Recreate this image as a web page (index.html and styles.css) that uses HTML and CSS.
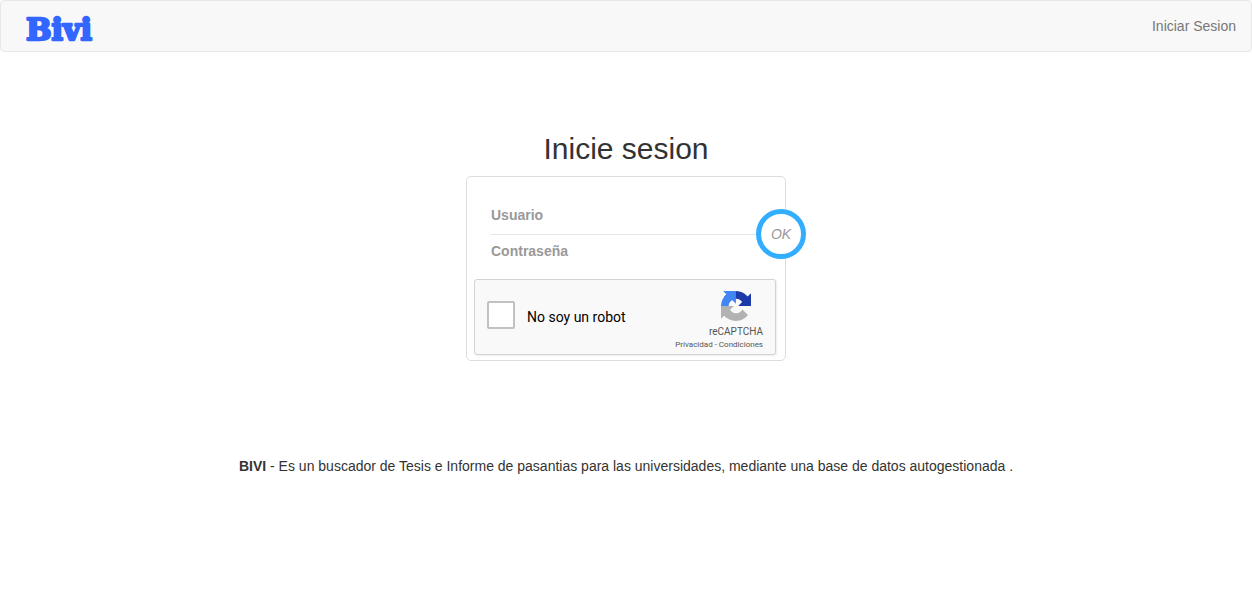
FILE: index.html
```html
<!DOCTYPE html>
<html lang="es">
<head>
<meta charset="utf-8">
<title>Bivi</title>
<link rel="stylesheet" href="styles.css">
</head>
<body>
<nav class="navbar">
  <a class="brand"><svg class="logo" width="76" height="34" viewBox="0 0 76 34"><text x="5" y="26.7" textLength="66" lengthAdjust="spacingAndGlyphs">Bivi</text></svg></a>
  <a class="nav-link">Iniciar Sesion</a>
</nav>
<main class="page">
  <h1 class="title">Inicie sesion</h1>
  <form class="card">
    <div class="fields">
      <label class="field">Usuario</label>
      <label class="field">Contraseña</label>
    </div>
    <button class="ok" type="button">OK</button>
    <div class="captcha">
      <span class="checkbox"></span>
      <span class="captcha-label">No soy un robot</span>
      <div class="captcha-brand">
        <svg class="captcha-icon" width="30" height="30" viewBox="0 0 64 64">
          <path fill="#1c3aa9" d="M64 31.955l-.033-1.37V4.687l-7.16 7.16C50.948 4.674 42.033.093 32.05.093c-10.4 0-19.622 4.96-25.458 12.64l11.736 11.86a15.55 15.55 0 0 1 4.754-5.334c2.05-1.6 4.952-2.906 8.968-2.906.485 0 .86.057 1.135.163 4.976.393 9.288 3.14 11.828 7.124l-8.307 8.307L64 31.953"/>
          <path fill="#4285f4" d="M31.862.094l-1.37.033H4.594l7.16 7.16C4.58 13.147 0 22.06 0 32.046c0 10.4 4.96 19.622 12.64 25.458L24.5 45.768a15.55 15.55 0 0 1-5.334-4.754c-1.6-2.05-2.906-4.952-2.906-8.968 0-.485.057-.86.163-1.135.393-4.976 3.14-9.288 7.124-11.828l8.307 8.307L31.86.095"/>
          <path fill="#b2b2b2" d="M.001 32.045l.033 1.37v25.898l7.16-7.16c5.86 7.173 14.774 11.754 24.76 11.754 10.4 0 19.622-4.96 25.458-12.64l-11.736-11.86a15.55 15.55 0 0 1-4.754 5.334c-2.05 1.6-4.952 2.906-8.968 2.906-.485 0-.86-.057-1.135-.163-4.976-.393-9.288-3.14-11.828-7.124l8.307-8.307c-10.522.04-22.4.066-27.295-.005"/>
        </svg>
        <div class="captcha-name">reCAPTCHA</div>
        <div class="captcha-links">Privacidad - Condiciones</div>
      </div>
    </div>
  </form>
  <p class="about"><b>BIVI</b> - Es un buscador de Tesis e Informe de pasantias para las universidades, mediante una base de datos autogestionada .</p>
</main>
</body>
</html>
```
FILE: styles.css
```css
* { box-sizing: border-box; }
body {
  margin: 0;
  background: #fff;
  color: #333;
  font: 14px/20px "Liberation Sans", Arial, sans-serif;
}
.navbar {
  display: flex;
  justify-content: space-between;
  height: 52px;
  padding: 0 15px 0 20px;
  background: #f8f8f8;
  border: 1px solid #e7e7e7;
  border-radius: 4px;
}
.brand { padding-top: 12px; }
.logo { display: block; }
.logo text {
  font: bold 29px "DejaVu Serif", serif;
  fill: #36f;
  stroke: #36f;
  stroke-width: 2.3px;
  stroke-linejoin: round;
}
.nav-link { padding-top: 15px; color: #777; }
.page {
  display: flex;
  flex-direction: column;
  align-items: center;
}
.title {
  margin: 80px 0 0;
  font-size: 30px;
  line-height: 33px;
  font-weight: 400;
}
.card {
  position: relative;
  width: 320px;
  height: 185px;
  margin-top: 11px;
  border: 1px solid #ddd;
  border-radius: 5px;
}
.fields { padding: 20px 24px 0; }
.field {
  display: block;
  height: 37px;
  line-height: 37px;
  font-weight: 700;
  color: #999;
}
.field + .field {
  height: 36px;
  line-height: 32px;
  border-top: 1px solid #e5e5e5;
}
.ok {
  position: absolute;
  top: 31.5px;
  right: -21px;
  width: 50px;
  height: 50px;
  padding: 0;
  border: 5px solid #33adff;
  border-radius: 50%;
  background: #fff;
  color: #999;
  font: italic 14px "Liberation Sans", Arial, sans-serif;
}
.captcha {
  display: flex;
  width: 302px;
  height: 76px;
  margin: 9px 0 0 7px;
  padding-left: 12px;
  background: #f9f9f9;
  border: 1px solid #d3d3d3;
  border-radius: 3px;
  box-shadow: 1px 1px 2px rgba(0, 0, 0, .08);
  font-family: Roboto, sans-serif;
}
.checkbox {
  width: 28px;
  height: 28px;
  margin-top: 21px;
  background: #fff;
  border: 2px solid #c1c1c1;
  border-radius: 2px;
}
.captcha-label {
  margin: 27px 0 0 12px;
  line-height: 20px;
  color: #000;
}
.captcha-brand {
  display: flex;
  flex-direction: column;
  align-items: flex-end;
  margin-left: auto;
  padding: 11px 12px 0 0;
  color: #555;
}
.captcha-icon { margin-right: 12px; }
.captcha-name { margin-top: 4px; font-size: 10px; line-height: 13px; }
.captcha-links { font-size: 8px; line-height: 14px; }
.about { margin: 95px 0 0; }
```
